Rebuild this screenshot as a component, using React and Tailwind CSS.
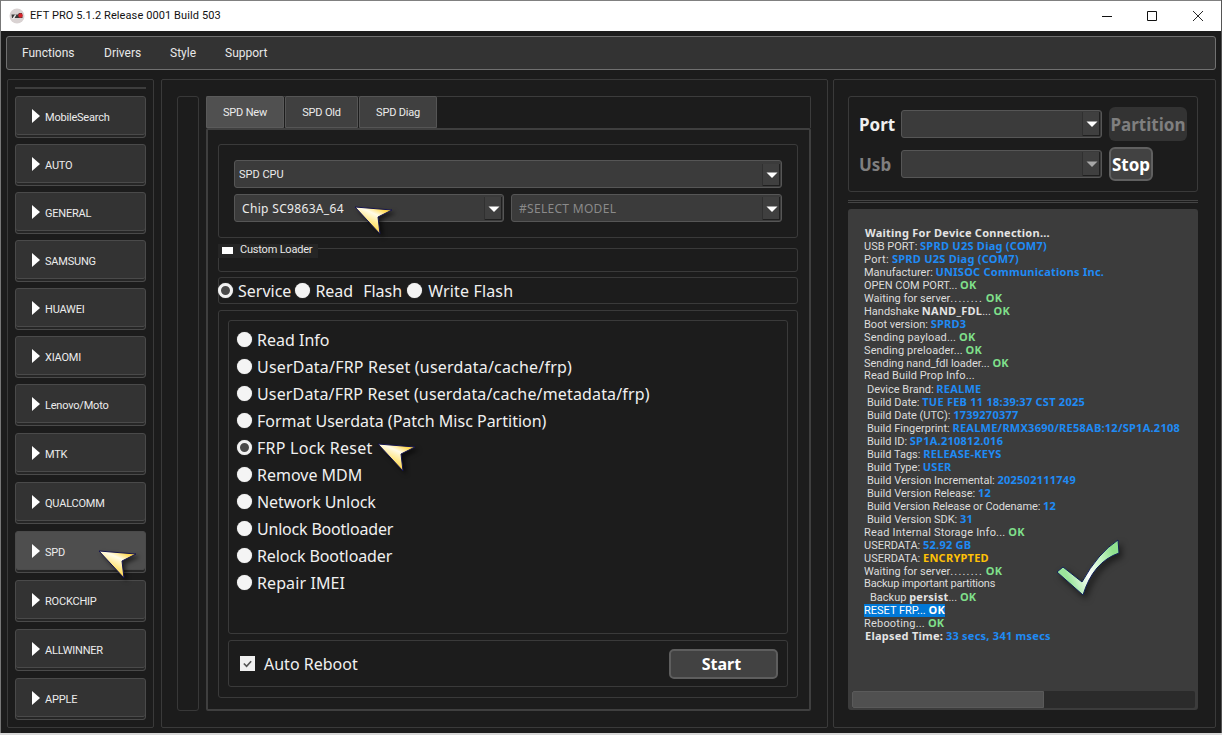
import React from "react";

const sideItems = [
  ["MobileSearch", "mt-0", false],
  ["AUTO", "mt-[6px]", false],
  ["GENERAL", "mt-[6px]", false],
  ["SAMSUNG", "mt-[6px]", false],
  ["HUAWEI", "mt-[6px]", false],
  ["XIAOMI", "mt-[6px]", false],
  ["Lenovo/Moto", "mt-[6px]", false],
  ["MTK", "mt-[7px]", false],
  ["QUALCOMM", "mt-[7px]", false],
  ["SPD", "mt-[7px]", true],
  ["ROCKCHIP", "mt-[7px]", false],
  ["ALLWINNER", "mt-[7px]", false],
  ["APPLE", "mt-[7px]", false],
];

const options = [
  ["Read Info", ""],
  ["UserData/FRP Reset (userdata/cache/frp)", "tracking-[0.2px]"],
  ["UserData/FRP Reset (userdata/cache/metadata/frp)", "tracking-[0.15px]"],
  ["Format Userdata (Patch Misc Partition)", ""],
  ["FRP Lock Reset", "tracking-[0.25px]"],
  ["Remove MDM", ""],
  ["Network Unlock", "tracking-[-0.1px]"],
  ["Unlock Bootloader", "tracking-[-0.2px]"],
  ["Relock Bootloader", "tracking-[-0.1px]"],
  ["Repair IMEI", "tracking-[0.1px]"],
];

const boldCls = "font-['Noto_Sans',sans-serif] font-bold tracking-[0.25px]";
const B = ({ children }) => <span className={`${boldCls} text-[#1f8bf5]`}>{children}</span>;
const OK = () => <span className={`${boldCls} text-[#7fdf8a]`}>OK</span>;
const W = ({ children }) => <span className={`${boldCls} text-[#e4e4e4]`}>{children}</span>;
const Dots = () => <span className="tracking-[1.2px]">........</span>;

const logLines = [
  [<W key="a">Waiting For Device Connection...</W>, "pl-[1px]"],
  [<>USB PORT: <B>SPRD U2S Diag (COM7)</B></>, ""],
  [<>Port: <B>SPRD U2S Diag (COM7)</B></>, "tracking-[0.3px]"],
  [<>Manufacturer: <B>UNISOC Communications Inc.</B></>, ""],
  [<>OPEN COM PORT... <OK /></>, ""],
  [<>Waiting for server<Dots /> <OK /></>, ""],
  [<>Handshake <W>NAND_FDL</W>... <OK /></>, ""],
  [<>Boot version: <B>SPRD3</B></>, ""],
  [<>Sending payload... <OK /></>, "tracking-[0.15px]"],
  [<>Sending preloader... <OK /></>, "tracking-[0.1px]"],
  [<>Sending nand_fdl loader... <OK /></>, ""],
  [<>Read Build Prop Info...</>, "tracking-[0.1px]"],
  [<>Device Brand: <B>REALME</B></>, "pl-[3px]"],
  [<>Build Date: <B>TUE FEB 11 18:39:37 CST 2025</B></>, "pl-[3px]"],
  [<>Build Date (UTC): <B>1739270377</B></>, "pl-[3px]"],
  [<>Build Fingerprint: <span className={`${boldCls} text-[#1f8bf5] tracking-[0.4px]`}>REALME/RMX3690/RE58AB:12/SP1A.2108</span></>, "pl-[3px]"],
  [<>Build ID: <B>SP1A.210812.016</B></>, "pl-[3px]"],
  [<>Build Tags: <B>RELEASE-KEYS</B></>, "pl-[3px]"],
  [<>Build Type: <B>USER</B></>, "pl-[3px]"],
  [<>Build Version Incremental: <B>202502111749</B></>, "pl-[3px]"],
  [<>Build Version Release: <B>12</B></>, "pl-[3px]"],
  [<>Build Version Release or Codename: <B>12</B></>, "pl-[3px] tracking-[-0.1px]"],
  [<>Build Version SDK: <B>31</B></>, "pl-[3px]"],
  [<>Read Internal Storage Info... <OK /></>, "tracking-[0.2px]"],
  [<>USERDATA: <B>52.92 GB</B></>, ""],
  [<>USERDATA: <span className={`${boldCls} text-[#ffc107]`}>ENCRYPTED</span></>, ""],
  [<>Waiting for server<Dots /> <OK /></>, ""],
  [<>Backup important partitions</>, "tracking-[-0.2px]"],
  [<>Backup <W>persist</W>... <OK /></>, "pl-[6px]"],
  null,
  [<>Rebooting... <OK /></>, "tracking-[0.2px]"],
  [<><W>Elapsed Time:</W> <B>33 secs, 341 msecs</B></>, "pl-[1px]"],
];

function Arrow({ cls, dim }) {
  return (
    <svg viewBox="0 0 14 8" className={`${cls} block`} aria-hidden="true">
      <path d="M1.5 1.5H12.5L7 7Z" fill={dim ? "#a8a8a8" : "#ffffff"} />
    </svg>
  );
}

function Combo({ children, cls, muted, dimArrow }) {
  return (
    <div className={`${cls} flex items-center justify-between rounded-[3px] border border-[#565656] bg-[#3b3b3b] ${muted ? "text-[#8a8a8a]" : "text-[#ececec]"}`}>
      <div className="min-w-0 flex-1 truncate">{children}</div>
      <div className="mr-[1px] flex h-[calc(100%-2px)] w-[18px] items-center justify-center border-l border-[#303030] bg-[#3f3f3f] shadow-[inset_-1px_-1px_0_#1f1f1f]">
        <Arrow cls="w-[14px] h-[8px]" dim={dimArrow} />
      </div>
    </div>
  );
}

function Radio({ on }) {
  return on ? (
    <span className="block h-[15px] w-[15px] shrink-0 rounded-full border-[3px] border-[#f2f2f2] bg-[#4a4a4a] shadow-[0_0_1px_#999]" />
  ) : (
    <span className="block h-[15px] w-[15px] shrink-0 rounded-full bg-[#f4f4f4] shadow-[0_0_1px_#999]" />
  );
}

function Cursor({ cls, id }) {
  return (
    <svg viewBox="0 0 44 34" className={`absolute h-[34px] w-[44px] drop-shadow-[3px_3px_2px_rgba(0,0,0,0.55)] ${cls}`} aria-hidden="true">
      <defs>
        <linearGradient id={id} x1="0.75" y1="0.1" x2="0.3" y2="0.8">
          <stop offset="0" stopColor="#ffd84e" />
          <stop offset="0.3" stopColor="#fffbe8" />
          <stop offset="0.7" stopColor="#ffe680" />
          <stop offset="1" stopColor="#ffcf3a" />
        </linearGradient>
      </defs>
      <path d="M1 1L38 4L24 11L26 28Z" fill={`url(#${id})`} stroke="#14144f" strokeWidth="1" strokeLinejoin="round" />
    </svg>
  );
}

function SideButton({ label, cls, active }) {
  return (
    <div className={`${cls} flex h-[42px] items-center rounded-[3px] border border-[#4a4a4a] ${active ? "bg-[#4e4e4e]" : "bg-[#333333]"} pl-[16px] text-[11px] tracking-[-0.2px] text-[#ececec] shadow-[inset_0_-2px_0_#262626,inset_0_-3px_0_#4a4a4a]`}>
      <svg viewBox="0 0 8 14" className="mb-[2px] mr-[5px] h-[14px] w-[8px] shrink-0" aria-hidden="true">
        <path d="M0 0L8 7L0 14Z" fill="#fff" />
      </svg>
      <span className="pt-[2px]">{label}</span>
    </div>
  );
}

export default function App() {
  return (
    <div className="relative flex h-[735px] w-[1222px] flex-col overflow-hidden bg-[#d8d8d8] font-['Roboto',sans-serif]">
      <div className="flex h-[733px] flex-col border-l border-[#777777] border-r-[1px] border-r-[#555555] bg-[#1c1c1c]">
        <div className="flex h-[31px] shrink-0 items-center border-t border-[#808080] bg-white pl-[8px] text-[11px] tracking-[0.1px] text-[#111]">
          <svg viewBox="0 0 16 16" className="mr-[5px] h-[16px] w-[16px]" aria-hidden="true">
            <circle cx="8" cy="8" r="7.5" fill="#d9d2d2" />
            <path d="M2.5 6.5H9L10 5H13L13.5 10H3Z" fill="#3a3a3a" />
            <circle cx="11.5" cy="7.5" r="2.2" fill="#d7232b" />
            <path d="M3 11L6 6.5H7.5L5 11Z" fill="#e9e9e9" />
          </svg>
          <span>EFT PRO 5.1.2 Release 0001 Build 503</span>
          <div className="ml-auto flex">
            <div className="flex h-[30px] w-[46px] items-center justify-center pr-[1px]">
              <svg viewBox="0 0 10 10" className="h-[10px] w-[10px]" aria-hidden="true"><path d="M0 5.5H10" stroke="#111" fill="none" /></svg>
            </div>
            <div className="flex h-[30px] w-[45px] items-center justify-center pr-[1px]">
              <svg viewBox="0 0 10 10" className="h-[10px] w-[10px]" aria-hidden="true"><path d="M0.5 0.5H9.5V9.5H0.5Z" stroke="#111" fill="none" /></svg>
            </div>
            <div className="flex h-[30px] w-[46px] items-center justify-center">
              <svg viewBox="0 0 10 10" className="h-[10px] w-[10px]" aria-hidden="true"><path d="M0 0L10 10M10 0L0 10" stroke="#111" fill="none" strokeWidth="0.9" /></svg>
            </div>
          </div>
        </div>

        <div className="mx-[5px] mt-[5px] flex h-[34px] shrink-0 items-center rounded-[3px] border border-[#707070] bg-[#333333] pl-[15px] text-[12px] text-[#e8e8e8]">
          <span className="w-[82px]">Functions</span>
          <span className="w-[66px]">Drivers</span>
          <span className="w-[55px]">Style</span>
          <span>Support</span>
        </div>

        <div className="mt-[9px] flex h-[649px] shrink-0 pl-[6px]">
          {/* sidebar */}
          <div className="flex w-[147px] shrink-0 flex-col rounded-[2px] border border-[#3a3a3a] px-[7px] pt-[7px]">
            <div className="mb-[7px] h-[2px] shrink-0 bg-[#3d3d3d]" />
            {sideItems.map(([l, c, a]) => (
              <SideButton key={l} label={l} cls={c} active={a} />
            ))}
          </div>

          {/* center */}
          <div className="ml-[7px] flex w-[667px] shrink-0 rounded-[2px] border border-[#3a3a3a] pl-[15px] pt-[16px]">
            <div className="h-[615px] w-[22px] shrink-0 rounded-[3px] border border-[#383838]" />
            <div className="ml-[7px] flex h-[615px] w-[605px] shrink-0 flex-col">
              <div className="flex h-[32px] shrink-0 items-end rounded-tr-[2px] border-r border-t border-[#3c3c3c] text-[11px] tracking-[-0.2px] text-[#ececec]">
                <div className="flex h-[32px] w-[78px] items-center justify-center rounded-t-[2px] border border-[#5a5a5a] bg-[#505050] pt-[3px]">SPD New</div>
                <div className="ml-[1px] flex h-[32px] w-[73px] items-center justify-center rounded-t-[2px] border border-[#555555] bg-[#404040] pt-[3px]">SPD Old</div>
                <div className="ml-[1px] flex h-[32px] w-[78px] items-center justify-center rounded-t-[2px] border border-[#555555] bg-[#404040] pt-[3px]">SPD Diag</div>
              </div>

              <div className="flex h-[583px] flex-col rounded-[2px] border-2 border-[#3f3f3f] pl-[10px] pr-[11px] pt-[14px]">
                <div className="flex h-[94px] shrink-0 flex-col rounded-[3px] border border-[#3a3a3a] px-[15px] pt-[15px]">
                  <Combo cls="h-[28px] pl-[4px] pt-[2px] text-[11px]">SPD CPU</Combo>
                  <div className="mt-[6px] flex gap-[7px] font-['Noto_Sans',sans-serif]">
                    <Combo cls="h-[28px] w-[270px] pl-[7px] pt-[1px] text-[12px] tracking-[0.33px]">Chip SC9863A_64</Combo>
                    <Combo cls="h-[28px] w-[271px] pl-[7px] pt-[1px] text-[12px] tracking-[0.3px]" muted>#SELECT MODEL</Combo>
                  </div>
                </div>

                <div className="relative mt-[10px] h-[24px] shrink-0 rounded-[3px] border border-[#3a3a3a]">
                  <div className="absolute -left-[1px] -top-[5px] flex h-[14px] w-[100px] items-center whitespace-nowrap bg-[#252525] pb-[1px] pl-[4px] text-[11px] tracking-[-0.2px] text-[#e8e8e8]">
                    <span className="mr-[7px] block h-[7px] w-[11px] shrink-0 bg-white" />
                    Custom Loader
                  </div>
                </div>

                <div className="mt-[5px] flex h-[27px] shrink-0 items-center rounded-[3px] border border-[#3a3a3a] font-['Noto_Sans',sans-serif] text-[16px] text-[#f0f0f0]">
                  <span className="-ml-[1px]"><Radio on /></span>
                  <span className="ml-[5px]">Service</span>
                  <span className="ml-[4px]"><Radio /></span>
                  <span className="ml-[5px]">Read</span>
                  <span className="ml-[10px]">Flash</span>
                  <span className="ml-[5px]"><Radio /></span>
                  <span className="ml-[6px] tracking-[0.15px]">Write Flash</span>
                </div>

                <div className="mt-[6px] flex h-[388px] shrink-0 flex-col rounded-[3px] border border-[#3a3a3a] p-[9px]">
                  <div className="flex h-[314px] shrink-0 flex-col rounded-[3px] border border-[#3a3a3a] pl-[8px] pt-[5px] font-['Noto_Sans',sans-serif] text-[16px] text-[#f0f0f0]">
                    {options.map(([o, t]) => (
                      <div key={o} className="flex h-[27px] shrink-0 items-center">
                        <Radio on={o === "FRP Lock Reset"} />
                        <span className={`ml-[5px] whitespace-nowrap ${t}`}>{o}</span>
                      </div>
                    ))}
                  </div>
                  <div className="mt-[6px] flex h-[47px] shrink-0 items-center rounded-[3px] border border-[#3a3a3a] pl-[11px] pr-[9px] font-['Noto_Sans',sans-serif]">
                    <span className="flex h-[15px] w-[15px] items-center justify-center bg-[#f0f0f0]">
                      <svg viewBox="0 0 12 12" className="h-[11px] w-[11px]" aria-hidden="true"><path d="M2 6L5 9L10 3.5" stroke="#555" strokeWidth="1.8" fill="none" /></svg>
                    </span>
                    <span className="ml-[9px] text-[16px] text-[#f0f0f0]">Auto Reboot</span>
                    <div className="ml-auto flex h-[30px] w-[109px] items-center justify-center rounded-[5px] border-2 border-[#5e5e5e] bg-[#424242] pr-[4px] text-[16px] font-bold text-white">Start</div>
                  </div>
                </div>
              </div>
            </div>
          </div>

          {/* right */}
          <div className="ml-[5px] flex w-[383px] shrink-0 flex-col rounded-[2px] border border-[#3a3a3a] pl-[14px] pt-[16px] font-['Noto_Sans',sans-serif]">
            <div className="h-[96px] w-[350px] shrink-0 rounded-[3px] border border-[#3a3a3a] pl-[10px] pt-[10px]">
              <div className="flex h-[34px] items-center">
                <span className="w-[42px] pt-[2px] text-[17px] font-bold text-[#f0f0f0]">Port</span>
                <Combo cls="h-[28px] w-[201px]"> </Combo>
                <div className="ml-[7px] flex h-[34px] w-[78px] items-center justify-center rounded-[6px] bg-[#333333] pt-[1px] text-[17px] font-bold text-[#7f7f7f]">Partition</div>
              </div>
              <div className="mt-[6px] flex h-[34px] items-center">
                <span className="w-[42px] pt-[2px] text-[17px] font-bold text-[#7f7f7f]">Usb</span>
                <Combo cls="h-[28px] w-[201px]" dimArrow> </Combo>
                <div className="ml-[7px] flex h-[34px] w-[44px] items-center justify-center rounded-[6px] border-2 border-[#606060] bg-[#424242] pt-[1px] text-[17px] font-bold text-white">Stop</div>
              </div>
            </div>
            <div className="mt-[8px] h-[3px] w-[350px] shrink-0 border-y border-[#444444]" />
            <div className="relative mt-[6px] flex h-[501px] w-[350px] shrink-0 flex-col rounded-[3px] bg-[#3c3c3c] pl-[16px] pt-[17px]">
              <div className="w-[321px] flex-1 overflow-hidden font-['Roboto',sans-serif] text-[11px] leading-[13px] text-[#dcdcdc]">
                {logLines.map((l, i) =>
                  l === null ? (
                    <div key={i} className="h-[13px] whitespace-nowrap">
                      <span className="bg-[#0078d7] text-white">RESET FRP... <span className={boldCls}>OK</span></span>
                    </div>
                  ) : (
                    <div key={i} className={`h-[13px] whitespace-nowrap ${l[1]}`}>{l[0]}</div>
                  )
                )}
              </div>
              <div className="mb-[2px] -ml-[12px] flex h-[17px] w-[343px] shrink-0 rounded-[2px] bg-[#2b2b2b]">
                <div className="h-full w-[192px] rounded-l-[2px] border border-[#5a5a5a] bg-[#505050]" />
              </div>
            </div>
          </div>
        </div>
      </div>

      {/* annotation overlays */}
      <Cursor id="c1" cls="left-[354px] top-[206px]" />
      <Cursor id="c2" cls="left-[377px] top-[443px]" />
      <Cursor id="c3" cls="left-[98px] top-[550px]" />
      <svg viewBox="0 0 70 62" className="absolute left-[1054px] top-[538px] h-[62px] w-[70px] drop-shadow-[3px_4px_3px_rgba(0,0,0,0.5)]" aria-hidden="true">
        <defs>
          <linearGradient id="chk" x1="0.1" y1="0.5" x2="0.9" y2="0.2">
            <stop offset="0" stopColor="#9be59b" />
            <stop offset="0.4" stopColor="#ffffff" />
            <stop offset="0.7" stopColor="#c9f5c9" />
            <stop offset="1" stopColor="#8fe08f" />
          </linearGradient>
        </defs>
        <path d="M3 34L9 29L28 44Q44 15 64 2L65 15Q39 24 29 57Z" fill="url(#chk)" stroke="#10205a" strokeWidth="1" strokeLinejoin="round" />
      </svg>
    </div>
  );
}
